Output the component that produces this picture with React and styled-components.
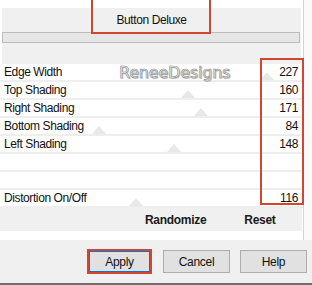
import React from 'react';
import styled, { createGlobalStyle } from 'styled-components';

const Global = createGlobalStyle`
  body {
    margin: 0;
    background: #f0f0f0;
    font-family: "Liberation Sans", Arial, sans-serif;
  }
`;

const Window = styled.div`
  position: relative;
  width: 312px;
  height: 285px;
  box-sizing: border-box;
  border-bottom: 2px solid #6e6e6e;
  display: flex;
  flex-direction: column;
  overflow: hidden;
`;

const Top = styled.div`
  display: flex;
  height: 240px;
`;

const Panel = styled.div`
  width: 303px;
  background: #fff;
  border-right: 1px solid #d4d4d4;
  display: flex;
  flex-direction: column;
`;

const Side = styled.div`
  flex: 1;
  background: #fafafa;
`;

const Header = styled.div`
  margin: 8px 0 0 2px;
  width: 299px;
  height: 56px;
  background: #f0f0f0;
  display: flex;
  flex-direction: column;
  align-items: center;
`;

const Title = styled.div`
  margin-top: 6px;
  font-size: 12px;
  line-height: 12px;
  letter-spacing: -0.4px;
  color: #111;
`;

const Track = styled.div`
  align-self: flex-start;
  margin-top: 6px;
  width: 296px;
  height: 9px;
  background: #e6e6e6;
  border: 1px solid #bcbcbc;
`;

const Rows = styled.div`
  display: flex;
  flex-direction: column;
`;

const Row = styled.div`
  position: relative;
  height: 16px;
  border-bottom: 2px solid #eeeeee;
  display: flex;
  align-items: center;
  justify-content: space-between;
  padding: 0 5px 0 4px;
  font-size: 12px;
  letter-spacing: -0.4px;
  color: #111;
`;

const Value = styled.span`
  position: relative;
  z-index: 1;
`;

const Thumb = styled.div`
  position: absolute;
  bottom: 0;
  width: 0;
  height: 0;
  border-left: 7px solid transparent;
  border-right: 7px solid transparent;
  border-bottom: 8px solid #e8e8e8;
`;

const ActionBand = styled.div`
  height: 23px;
  width: 302px;
  background: #f0f0f0;
  display: flex;
  align-items: center;
  padding-left: 145px;
  box-sizing: border-box;
  gap: 38px;
`;

const Action = styled.span`
  font-size: 12px;
  font-weight: bold;
  letter-spacing: -0.3px;
  color: #1a1a1a;
`;

const Footer = styled.div`
  flex: 1;
  display: flex;
  justify-content: flex-end;
  align-items: flex-start;
  gap: 10px;
  padding: 10px 5px 0 0;
`;

const Button = styled.button`
  width: ${(p) => (p.$focused ? 65 : 67)}px;
  height: ${(p) => (p.$focused ? 25 : 23)}px;
  margin-top: ${(p) => (p.$focused ? -1 : 0)}px;
  margin-right: ${(p) => (p.$focused ? 1 : 0)}px;
  box-sizing: border-box;
  background: #e1e1e1;
  border: ${(p) => (p.$focused ? '2px solid #d2452f' : '1px solid #adadad')};
  box-shadow: ${(p) => (p.$focused ? 'inset 0 0 0 1px #0078d7' : 'none')};
  font-family: "Liberation Sans", Arial, sans-serif;
  font-size: 12px;
  letter-spacing: -0.3px;
  color: #111;
  padding: 0;
`;

const Mark = styled.div`
  position: absolute;
  border: 2px solid #d2452f;
  box-sizing: border-box;
  pointer-events: none;
`;

const Watermark = styled.div`
  position: absolute;
  left: 119px;
  top: 63px;
  font-family: "DejaVu Sans", sans-serif;
  font-size: 16px;
  letter-spacing: -0.2px;
  color: #ececec;
  -webkit-text-stroke: 0.6px #8c8c8c;
  text-shadow: 1px 1px 0 #c4c4c4;
  pointer-events: none;
`;

const params = [
  { label: 'Edge Width', value: 227 },
  { label: 'Top Shading', value: 160 },
  { label: 'Right Shading', value: 171 },
  { label: 'Bottom Shading', value: 84 },
  { label: 'Left Shading', value: 148 },
  { label: '', value: null },
  { label: '', value: null },
  { label: 'Distortion On/Off', value: 116 },
];

export default function App() {
  return (
    <>
      <Global />
      <Window>
        <Top>
          <Panel>
            <Header>
              <Title>Button Deluxe</Title>
              <Track />
            </Header>
            <Rows>
              {params.map((p, i) => (
                <Row key={i}>
                  <span>{p.label}</span>
                  {p.value !== null && (
                    <>
                      <Thumb style={{ left: Math.round((p.value / 255) * 300) - 7 }} />
                      <Value>{p.value}</Value>
                    </>
                  )}
                </Row>
              ))}
            </Rows>
            <ActionBand>
              <Action>Randomize</Action>
              <Action>Reset</Action>
            </ActionBand>
          </Panel>
          <Side />
        </Top>
        <Footer>
          <Button $focused>Apply</Button>
          <Button>Cancel</Button>
          <Button>Help</Button>
        </Footer>
        <Watermark>ReneeDesigns</Watermark>
        <Mark style={{ left: 91, top: -4, width: 120, height: 38 }} />
        <Mark style={{ left: 260, top: 58, width: 44, height: 147 }} />
      </Window>
    </>
  );
}
